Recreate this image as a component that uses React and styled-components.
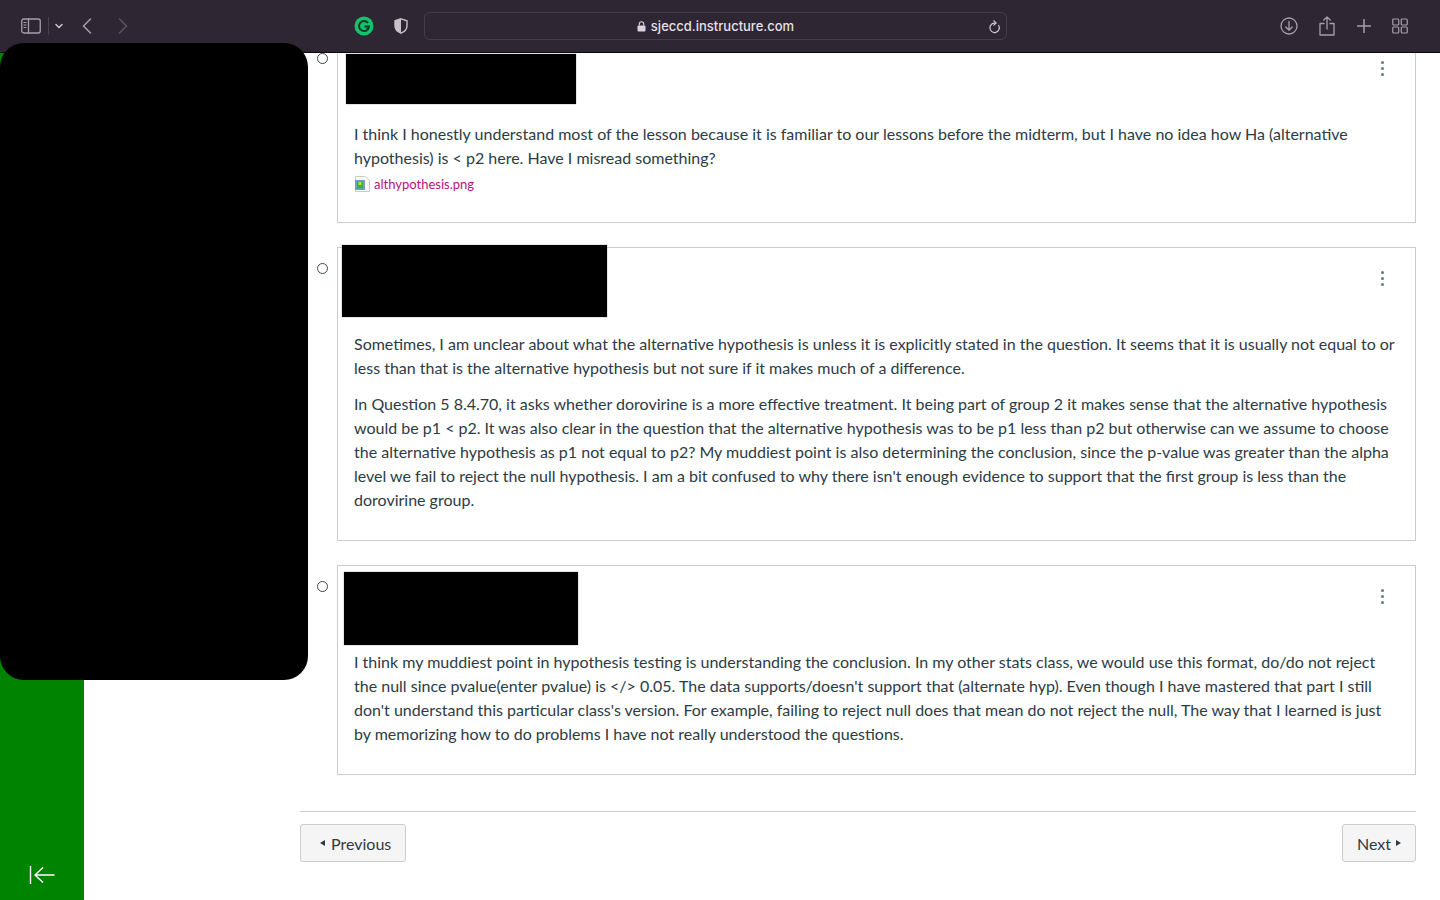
import React from 'react'
import styled, { createGlobalStyle } from 'styled-components'

const Global = createGlobalStyle`
html, body {
  margin: 0;
  padding: 0;
  background: #fff;
}
* {
  box-sizing: border-box;
}
`
const Page = styled.div`
position: relative;
width: 1440px;
height: 900px;
overflow: hidden;
display: flex;
flex-direction: column;
font-family: Lato, "Open Sans", sans-serif;
color: #2d3b45;
`
const Toolbar = styled.header`
flex: none;
height: 53px;
display: flex;
align-items: center;
padding: 0 19px 0 21px;
background: #2f2633;
border-bottom: 1px solid #0c090e;
position: relative;
z-index: 3;
`
const ToolIcon = styled.svg`
display: block;
flex: none;
margin-left: ${p => p.$ml || 0}px;
`
const Divider = styled.span`
width: 1px;
height: 18px;
background: #4a4150;
margin-left: 7px;
`
const AddressBar = styled.div`
width: 583px;
height: 28px;
margin-left: 16px;
margin-right: 273px;
border: 1px solid #463d4b;
border-radius: 6px;
display: flex;
align-items: center;
justify-content: center;
position: relative;
font-family: Inter, sans-serif;
font-size: 13px;
font-weight: 500;
color: #e6e1e8;
`
const Host = styled.span`
margin-left: 5px;
`
const Reload = styled.svg`
position: absolute;
right: 5px;
top: 7px;
`
const Body = styled.div`
flex: 1;
display: flex;
min-height: 0;
overflow: hidden;
`
const Nav = styled.nav`
flex: none;
width: 84px;
background: #008400;
display: flex;
align-items: flex-end;
justify-content: center;
padding-bottom: 15px;
`
const Main = styled.main`
flex: 1;
padding: 0 24px 0 216px;
margin-top: -16px;
`
const Entries = styled.ul`
list-style: none;
margin: 0;
padding: 0;
display: flex;
flex-direction: column;
gap: 24px;
`
const Entry = styled.li`
display: flex;
`
const Marker = styled.span`
flex: none;
width: 11px;
height: 11px;
margin: 16px 9px 0 17px;
border: 1.5px solid #3b4750;
border-radius: 50%;
background: #fff;
position: relative;
z-index: 1;
`
const Card = styled.article`
flex: 1;
position: relative;
border: 1px solid #c7cdd1;
padding: 0 16px 16px;
`
const CardHead = styled.div`
height: 84px;
display: flex;
justify-content: flex-end;
padding: 23px 15px 0 0;
`
const Kebab = styled.button`
width: 4px;
height: 15px;
padding: 0;
border: 0;
background: none;
display: flex;
flex-direction: column;
justify-content: space-between;
align-items: center;
`
const Dot = styled.span`
width: 3px;
height: 3px;
border-radius: 50%;
background: #6b7780;
`
const Redacted = styled.div`
position: absolute;
left: ${p => p.$left}px;
top: ${p => p.$top}px;
width: ${p => p.$w}px;
height: ${p => p.$h}px;
background: #000;
box-shadow: 0 0 1px #666;
`
const Para = styled.p`
margin: 0 0 12px;
font-size: 16px;
line-height: 24px;
letter-spacing: 0;
`
const Attachment = styled.a`
display: flex;
align-items: center;
gap: 4px;
height: 16px;
margin: -6px 0 14px;
font-size: 13px;
color: #b5137f;
`
const Pager = styled.div`
margin: 36px 0 0 0;
border-top: 1px solid #c7cdd1;
padding-top: 12px;
display: flex;
justify-content: space-between;
`
const PageButton = styled.button`
height: 38px;
padding: 0 ${p => p.$next ? 14 : 14}px 0 ${p => p.$next ? 14 : 19}px;
display: flex;
align-items: center;
gap: ${p => p.$next ? 5 : 6}px;
border: 1px solid #c7cdd1;
border-radius: 3px;
background: #f5f5f5;
color: #2d3b45;
font-family: inherit;
font-size: 16px;
`
const Caret = styled.span`
width: 0;
height: 0;
border-top: 3.5px solid transparent;
border-bottom: 3.5px solid transparent;
${p => p.$right ? 'border-left: 5px solid #2d3b45;' : 'border-right: 5px solid #2d3b45;'}
`
const Mask = styled.div`
position: absolute;
left: 0;
top: 43px;
width: 308px;
height: 637px;
background: #000;
border-radius: 24px;
z-index: 4;
`

const stroke = { fill: 'none', stroke: '#a69fab', strokeWidth: 1.5, strokeLinecap: 'round', strokeLinejoin: 'round' }

const ENTRIES = [
  {
    redact: { $left: 8, $top: 16, $w: 230, $h: 50 },
    paras: [
      'I think I honestly understand most of the lesson because it is familiar to our lessons before the midterm, but I have no idea how Ha (alternative hypothesis) is < p2 here. Have I misread something?',
    ],
    file: 'althypothesis.png',
  },
  {
    redact: { $left: 4, $top: -3, $w: 265, $h: 72 },
    paras: [
      'Sometimes, I am unclear about what the alternative hypothesis is unless it is explicitly stated in the question. It seems that it is usually not equal to or less than that is the alternative hypothesis but not sure if it makes much of a difference.',
      "In Question 5 8.4.70, it asks whether dorovirine is a more effective treatment. It being part of group 2 it makes sense that the alternative hypothesis would be p1 < p2. It was also clear in the question that the alternative hypothesis was to be p1 less than p2 but otherwise can we assume to choose the alternative hypothesis as p1 not equal to p2? My muddiest point is also determining the conclusion, since the p-value was greater than the alpha level we fail to reject the null hypothesis. I am a bit confused to why there isn't enough evidence to support that the first group is less than the dorovirine group.",
    ],
  },
  {
    redact: { $left: 6, $top: 6, $w: 234, $h: 73 },
    paras: [
      "I think my muddiest point in hypothesis testing is understanding the conclusion. In my other stats class, we would use this format, do/do not reject the null since pvalue(enter pvalue) is </> 0.05. The data supports/doesn't support that (alternate hyp). Even though I have mastered that part I still don't understand this particular class's version. For example, failing to reject null does that mean do not reject the null, The way that I learned is just by memorizing how to do problems I have not really understood the questions.",
    ],
  },
]

function FileIcon () {
  return (
    <ToolIcon width='16' height='16' viewBox='0 0 16 16'>
      <path d='M1.5.5h10l4 4v11h-14z' fill='#fafafa' stroke='#c9ccc9' />
      <rect x='1' y='4' width='10' height='10' fill='#6f9fd0' />
      <rect x='3' y='5.5' width='6' height='7' fill='#3fae3f' />
      <rect x='4.5' y='6' width='3' height='3' fill='#c5d84a' />
    </ToolIcon>
  )
}

function App () {
  return (
    <Page>
      <Global />
      <Toolbar>
        <ToolIcon width='20' height='16' viewBox='0 0 20 16'>
          <rect x='.75' y='1' width='18.5' height='14' rx='2' {...stroke} strokeWidth='1.3' />
          <path d='M7.5 1v14' {...stroke} strokeWidth='1.3' />
          <path d='M3 4.5h2M3 7h2M3 9.5h2' {...stroke} strokeWidth='1.2' />
        </ToolIcon>
        <Divider />
        <ToolIcon $ml='6' width='8' height='6' viewBox='0 0 8 6'>
          <path d='M1 1.5l3 3 3-3' {...stroke} stroke='#c9c3cd' />
        </ToolIcon>
        <ToolIcon $ml='19' width='10' height='16' viewBox='0 0 10 16'>
          <path d='M8.5 1L1.5 8l7 7' {...stroke} />
        </ToolIcon>
        <ToolIcon $ml='26' width='10' height='16' viewBox='0 0 10 16'>
          <path d='M1.5 1l7 7-7 7' {...stroke} stroke='#5d5462' />
        </ToolIcon>
        <ToolIcon $ml='226' width='20' height='20' viewBox='0 0 20 20'>
          <circle cx='10' cy='10' r='9.5' fill='#15c26b' />
          <path d='M14 7a5 5 0 1 0 1 3.5h-4.5' fill='none' stroke='#123c2a' strokeWidth='2' />
          <path d='M12 13l3-2.5v3.5z' fill='#123c2a' />
        </ToolIcon>
        <ToolIcon $ml='20' width='14' height='16' viewBox='0 0 14 16'>
          <path d='M7 .8l6 2v5c0 3.6-2.4 6-6 7.4C3.4 13.800 1 11.400 1 7.800v-5z' fill='none' stroke='#c8c2cc' strokeWidth='1.4' />
          <path d='M7 .8v14.400C3.400 13.800 1 11.400 1 7.800v-5z' fill='#c8c2cc' />
        </ToolIcon>
        <AddressBar>
          <ToolIcon width='9' height='11' viewBox='0 0 9 11'>
            <rect x='.5' y='4.500' width='8' height='6' rx='1' fill='#d9d4dc' />
            <path d='M2.300 4.500V3a2.200 2.200 0 0 1 4.400 0v1.500' fill='none' stroke='#d9d4dc' strokeWidth='1.1' />
          </ToolIcon>
          <Host>sjeccd.instructure.com</Host>
          <Reload width='13' height='14' viewBox='0 0 13 14'>
            <path d='M10.700 5.500a4.700 4.700 0 1 1-3.200-2.300' {...stroke} stroke='#cfc9d3' strokeWidth='1.2' />
            <path d='M5.800 .8l2.400 2.300-2.400 2' {...stroke} stroke='#cfc9d3' strokeWidth='1.2' />
          </Reload>
        </AddressBar>
        <ToolIcon width='18' height='18' viewBox='0 0 18 18'>
          <circle cx='9' cy='9' r='8' {...stroke} strokeWidth='1.3' />
          <path d='M9 4.500v8.500M5.800 10l3.200 3.200L12.200 10' {...stroke} strokeWidth='1.3' />
        </ToolIcon>
        <ToolIcon $ml='21' width='16' height='20' viewBox='0 0 16 20'>
          <path d='M5 7.500H1v11.500h14V7.500h-4M8 13V1M4.700 4L8 1l3.300 3' {...stroke} strokeWidth='1.3' />
        </ToolIcon>
        <ToolIcon $ml='22' width='14' height='14' viewBox='0 0 14 14'>
          <path d='M7 .5v13M.5 7h13' {...stroke} />
        </ToolIcon>
        <ToolIcon $ml='21' width='16' height='16' viewBox='0 0 16 16'>
          <rect x='.75' y='1' width='6' height='6' rx='1' {...stroke} strokeWidth='1.2' />
          <rect x='9.250' y='1' width='6' height='6' rx='1' {...stroke} strokeWidth='1.2' />
          <rect x='.75' y='9' width='6' height='6' rx='1' {...stroke} strokeWidth='1.2' />
          <rect x='9.250' y='9' width='6' height='6' rx='1' {...stroke} strokeWidth='1.2' />
        </ToolIcon>
      </Toolbar>
      <Body>
        <Nav>
          <ToolIcon width='26' height='20' viewBox='0 0 26 20'>
            <path d='M1.500 1v18M25.500 10H6M14 2.500L6 10l8 7.500' fill='none' stroke='#fff' strokeWidth='1.4' />
          </ToolIcon>
        </Nav>
        <Main>
          <Entries>
            {ENTRIES.map((entry, i) => (
              <Entry key={i}>
                <Marker />
                <Card>
                  <Redacted {...entry.redact} />
                  <CardHead>
                    <Kebab>
                      <Dot />
                      <Dot />
                      <Dot />
                    </Kebab>
                  </CardHead>
                  {entry.paras.map((text, j) => <Para key={j}>{text}</Para>)}
                  {entry.file && (
                    <Attachment>
                      <FileIcon />
                      {entry.file}
                    </Attachment>
                  )}
                </Card>
              </Entry>
            ))}
          </Entries>
          <Pager>
            <PageButton>
              <Caret />
              Previous
            </PageButton>
            <PageButton $next>
              Next
              <Caret $right />
            </PageButton>
          </Pager>
        </Main>
      </Body>
      <Mask />
    </Page>
  )
}

export default App
